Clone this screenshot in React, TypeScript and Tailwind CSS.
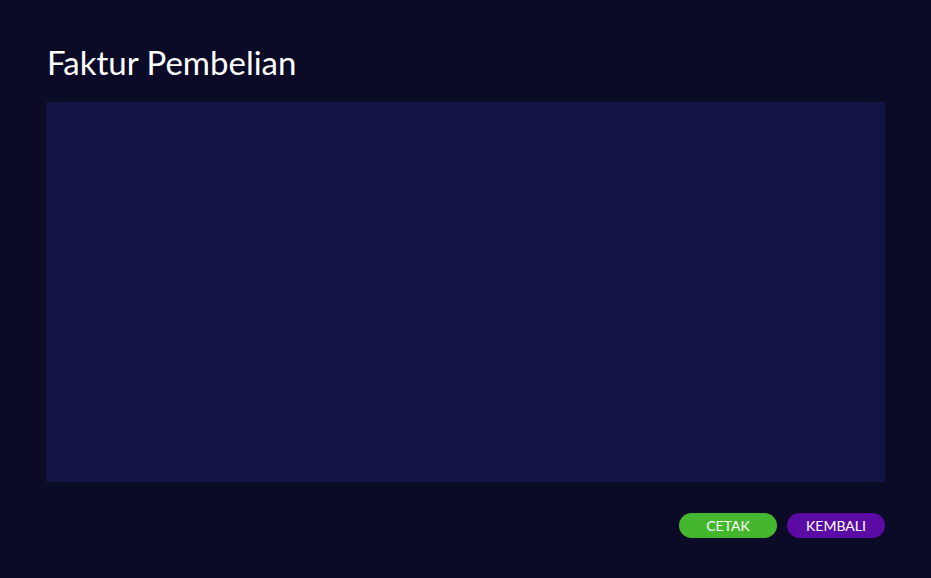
const App = () => {
  return (
    <div
      className="w-[931px] h-[578px] bg-[#0b0b27] flex flex-col px-[46px] pt-[42px]"
      style={{ fontFamily: "Lato, 'Noto Sans', sans-serif" }}
    >
      <h1 className="text-[33px] leading-[40px] text-white pl-[1px]">Faktur Pembelian</h1>
      <div className="mt-[20px] h-[380px] bg-[#121443]" />
      <div className="mt-[31px] flex justify-end gap-[10px]">
        <button className="w-[98px] h-[25px] rounded-full bg-[#44b72f] text-white text-[14px] leading-none">
          CETAK
        </button>
        <button className="w-[98px] h-[25px] rounded-full bg-[#5b0ba3] text-white text-[14px] leading-none">
          KEMBALI
        </button>
      </div>
    </div>
  );
};

export default App;
